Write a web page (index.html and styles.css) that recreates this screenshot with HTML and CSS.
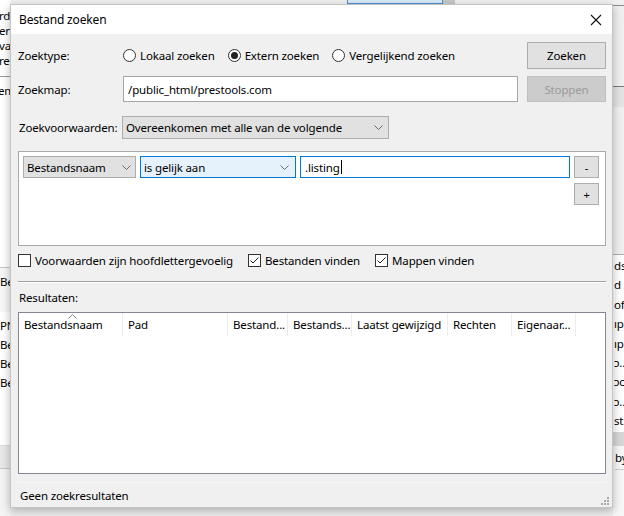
FILE: index.html
```html
<!DOCTYPE html>
<html lang="nl">
<head>
<meta charset="utf-8">
<title>Bestand zoeken</title>
<link rel="stylesheet" href="styles.css">
</head>
<body>
<div class="desk">
  <div class="bg-left">
    <div class="bl-top"><span>rd</span><span>erv</span><span>va</span><span>rer</span></div>
    <div class="bl-mid"><span>em</span></div>
    <div class="bl-head"><span>Be</span></div>
    <div class="bl-list"><span>PN</span><span>Be</span><span>Be</span><span>Be</span></div>
    <div class="bl-band"></div>
    <div class="bl-foot"></div>
  </div>
  <div class="bg-center">
    <div class="tabstrip"><span class="tab-sel"></span><span class="tab-btn"></span></div>
  </div>
  <div class="bg-right">
    <div class="br-top"></div>
    <div class="br-tool"></div>
    <div class="br-gray"></div>
    <div class="br-list"><span>ds</span><span>d</span><span>of.</span><span>ıp.</span><span>ıp.</span><span>ɔ...</span><span>ɔc.</span><span>ɔ...</span><span>st.</span></div>
    <div class="br-band"></div>
    <div class="br-foot"><span>by</span></div>
  </div>
</div>

<div class="dialog">
  <div class="titlebar">
    <span class="title">Bestand zoeken</span>
    <span class="close"><svg width="12" height="12" viewBox="0 0 12 12"><path d="M1 1L11 11M11 1L1 11" stroke="#111" stroke-width="1.1" fill="none"/></svg></span>
  </div>
  <div class="body">
    <div class="topgrid">
      <span class="lbl">Zoektype:</span>
      <div class="radios">
        <span class="radio"><i class="rb"></i>Lokaal zoeken</span>
        <span class="radio"><i class="rb on"></i>Extern zoeken</span>
        <span class="radio"><i class="rb"></i>Vergelijkend zoeken</span>
      </div>
      <button class="btn">Zoeken</button>
      <span class="lbl">Zoekmap:</span>
      <div class="field">/public_html/prestools.com</div>
      <button class="btn disabled">Stoppen</button>
    </div>

    <div class="condrow">
      <span class="lbl wide">Zoekvoorwaarden:</span>
      <div class="select sel-main"><span>Overeenkomen met alle van de volgende</span><svg class="chev" width="9" height="5" viewBox="0 0 9 5"><path d="M0.5 0.5L4.5 4.5L8.5 0.5" stroke="#6b6b6b" fill="none"/></svg></div>
    </div>

    <div class="conds">
      <div class="select sel-a"><span>Bestandsnaam</span><svg class="chev" width="9" height="5" viewBox="0 0 9 5"><path d="M0.5 0.5L4.5 4.5L8.5 0.5" stroke="#6b6b6b" fill="none"/></svg></div>
      <div class="select sel-b"><span>is gelijk aan</span><svg class="chev" width="9" height="5" viewBox="0 0 9 5"><path d="M0.5 0.5L4.5 4.5L8.5 0.5" stroke="#6b6b6b" fill="none"/></svg></div>
      <div class="field focus">.listing<span class="caret"></span></div>
      <button class="btn mini">-</button>
      <button class="btn mini plus">+</button>
    </div>

    <div class="checks">
      <span class="check"><i class="cb"></i>Voorwaarden zijn hoofdlettergevoelig</span>
      <span class="check"><i class="cb"><svg width="11" height="11" viewBox="0 0 11 11"><path d="M1.5 5.5L4 8L9.5 2.5" stroke="#222" stroke-width="1" fill="none"/></svg></i>Bestanden vinden</span>
      <span class="check"><i class="cb"><svg width="11" height="11" viewBox="0 0 11 11"><path d="M1.5 5.5L4 8L9.5 2.5" stroke="#222" stroke-width="1" fill="none"/></svg></i>Mappen vinden</span>
    </div>

    <div class="sep"></div>

    <div class="reslabel">Resultaten:</div>

    <div class="results">
      <div class="thead">
        <span class="th c1">Bestandsnaam<svg class="sort" width="9" height="5" viewBox="0 0 9 5"><path d="M0.5 4.5L4.5 0.5L8.5 4.5" stroke="#8a8a8a" fill="none"/></svg></span>
        <span class="th c2">Pad</span>
        <span class="th c3">Bestand...</span>
        <span class="th c4">Bestands...</span>
        <span class="th c5">Laatst gewijzigd</span>
        <span class="th c6">Rechten</span>
        <span class="th c7">Eigenaar...</span>
      </div>
    </div>

    <div class="status">
      <span>Geen zoekresultaten</span>
      <svg class="grip" width="8" height="8" viewBox="0 0 8 8"><g fill="#a8a8a8"><rect x="6" y="0" width="2" height="2"/><rect x="3" y="3" width="2" height="2"/><rect x="6" y="3" width="2" height="2"/><rect x="0" y="6" width="2" height="2"/><rect x="3" y="6" width="2" height="2"/><rect x="6" y="6" width="2" height="2"/></g></svg>
    </div>
  </div>
</div>
</body>
</html>
```

FILE: styles.css
```css
* { box-sizing: border-box; }

html, body {
  margin: 0;
  padding: 0;
}

body {
  width: 624px;
  height: 516px;
  overflow: hidden;
  position: relative;
  background: #f0f0f0;
  font-family: "Noto Sans", "Open Sans", sans-serif;
  font-size: 11.5px;
  letter-spacing: -0.15px;
  color: #000;
}

/* ---------- background application ---------- */
.desk {
  display: grid;
  grid-template-columns: 10px 603px 11px;
  height: 516px;
}

.bg-left {
  display: flex;
  flex-direction: column;
  background: #fff;
  overflow: hidden;
  white-space: nowrap;
}
.bg-left span { display: block; height: 15px; line-height: 15px; overflow: hidden; }
.bl-top {
  height: 77px;
  padding-top: 8px;
  border-bottom: 1px solid #9a9a9a;
}
.bl-top span { margin-left: -1px; }
.bl-mid {
  height: 190px;
  padding-top: 6px;
}
.bl-mid span { margin-left: -2px; }
.bl-head {
  height: 45px;
  border-top: 1px solid #c8c8c8;
  background: #f7f7f7;
  padding-top: 6px;
}
.bl-list {
  height: 133px;
  padding-top: 4px;
}
.bl-list span { height: 19px; line-height: 19px; }
.bl-band {
  height: 24px;
  background: #e8e8e8;
  border-top: 1px solid #dcdcdc;
  border-bottom: 1px solid #c8c8c8;
}
.bl-foot { flex: 1; background: #f4f4f4; }

.bg-center { background: #f0f0f0; }
.tabstrip {
  display: flex;
  height: 4px;
  padding-left: 337px;
}
.tab-sel {
  width: 96px;
  height: 4px;
  background: #d8eaf9;
  border: 1px solid #4a90d6;
  border-top: none;
}
.tab-btn {
  width: 12px;
  height: 4px;
  background: #c8c8c8;
}

.bg-right {
  display: flex;
  flex-direction: column;
  background: #f0f0f0;
  overflow: hidden;
  white-space: nowrap;
}
.br-top {
  height: 6px;
  border-bottom: 1px solid #8a8a8a;
}
.br-tool {
  height: 81px;
  border-bottom: 1px solid #7a7a7a;
}
.br-gray {
  height: 168px;
  border-top: 20px solid #e4e4e4;
  border-bottom: 1px solid #b0b0b0;
}
.br-list {
  height: 177px;
  background: #fff;
  padding-top: 1px;
}
.br-list span { display: block; height: 19.4px; line-height: 19.4px; padding-left: 1px; overflow: hidden; }
.br-band {
  height: 14px;
  background: #d6d6d6;
}
.br-foot {
  flex: 1;
  background: #f7f7f7;
  padding-top: 3px;
  padding-left: 2px;
}
.br-foot span { display: block; line-height: 18px; border-bottom: 1px solid #d0d0d0; padding-bottom: 2px; }

/* ---------- dialog window ---------- */
.dialog {
  position: absolute;
  left: 10px;
  top: 4px;
  width: 603px;
  height: 504px;
  background: #f0f0f0;
  border: 1px solid #c4c4c4;
  box-shadow: 0 3px 9px rgba(0, 0, 0, 0.28);
  display: flex;
  flex-direction: column;
}

.titlebar {
  height: 29px;
  background: #fff;
  display: flex;
  align-items: center;
  justify-content: space-between;
  padding-left: 8px;
  flex: none;
}
.title { font-size: 12px; }
.close {
  width: 32px;
  height: 29px;
  display: flex;
  align-items: center;
  justify-content: center;
}

.body {
  flex: 1;
  display: flex;
  flex-direction: column;
  padding: 8px 6px 0 7px;
  position: relative;
}

.lbl { display: flex; align-items: center; }

.topgrid {
  display: grid;
  grid-template-columns: 96px 395px 79px;
  grid-template-rows: 27px 26px;
  column-gap: 9px;
  row-gap: 7px;
}

.radios {
  display: flex;
  align-items: center;
  gap: 13px;
}
.radio {
  display: flex;
  align-items: center;
  gap: 4px;
}
.rb {
  width: 13px;
  height: 13px;
  border: 1px solid #333;
  border-radius: 50%;
  background: #fff;
  display: flex;
  align-items: center;
  justify-content: center;
}
.rb.on::after {
  content: "";
  width: 7px;
  height: 7px;
  border-radius: 50%;
  background: #222;
}

.btn {
  font: inherit;
  letter-spacing: inherit;
  color: #000;
  background: #e1e1e1;
  border: 1px solid #adadad;
  padding: 0;
  margin: 0;
  display: flex;
  align-items: center;
  justify-content: center;
}
.btn.disabled {
  background: #cccccc;
  border-color: #bfbfbf;
  color: #9b9b9b;
}

.field {
  background: #fff;
  border: 1px solid #a6a6a6;
  display: flex;
  align-items: center;
  padding-left: 4px;
}
.field.focus { border-color: #0078d7; }
.caret {
  width: 1px;
  height: 14px;
  background: #000;
  margin-left: 1px;
}

.condrow {
  display: flex;
  align-items: center;
  margin-top: 14px;
  height: 23px;
}
.lbl.wide { width: 104px; height: 23px; padding-left: 1px; }

.select {
  height: 23px;
  background: #e1e1e1;
  border: 1px solid #adadad;
  display: flex;
  align-items: center;
  justify-content: space-between;
  padding: 0 5px 0 3px;
}
.sel-main { width: 267px; }

.conds {
  margin-top: 12px;
  height: 95px;
  background: #fff;
  border: 1px solid #a9a9a9;
  padding: 4px;
  display: grid;
  grid-template-columns: 113px 156px 270px 25px;
  grid-template-rows: 22px 22px;
  column-gap: 4px;
  row-gap: 5px;
  align-content: start;
}
.conds .select { height: 22px; }
.sel-a { padding-right: 4px; }
.sel-b {
  background: #e5f1fb;
  border-color: #0078d7;
  padding-right: 6px;
}
.btn.mini { font-size: 11px; }
.btn.plus { grid-column: 4; }

.checks {
  margin-top: 7px;
  height: 15px;
  display: flex;
  align-items: center;
  gap: 15px;
}
.check {
  display: flex;
  align-items: center;
  gap: 4px;
}
.cb {
  width: 13px;
  height: 13px;
  border: 1px solid #333;
  background: #fff;
  display: flex;
  align-items: center;
  justify-content: center;
}

.sep {
  margin-top: 13px;
  height: 2px;
  border-top: 1px solid #a0a0a0;
  border-bottom: 1px solid #fff;
}

.reslabel {
  margin-top: 6px;
  height: 16px;
  display: flex;
  align-items: center;
  padding-left: 1px;
}

.results {
  margin-top: 7px;
  height: 162px;
  background: #fff;
  border: 1px solid #828790;
}
.thead {
  display: flex;
  height: 23px;
}
.th {
  position: relative;
  display: flex;
  align-items: center;
  padding-left: 5px;
  border-right: 1px solid #ececec;
  white-space: nowrap;
  overflow: hidden;
}
.c1 { width: 104px; }
.c2 { width: 105px; }
.c3 { width: 60px; }
.c4 { width: 64px; }
.c5 { width: 96px; }
.c6 { width: 64px; }
.c7 { width: 64px; }
.sort {
  position: absolute;
  left: 49px;
  top: 1px;
}

.status {
  margin-top: 8px;
  flex: 1;
  display: flex;
  align-items: center;
  padding-left: 2px;
  border-top: 1px solid #f7f7f7;
  position: relative;
}
.grip {
  position: absolute;
  right: -3px;
  bottom: 2px;
}
```
